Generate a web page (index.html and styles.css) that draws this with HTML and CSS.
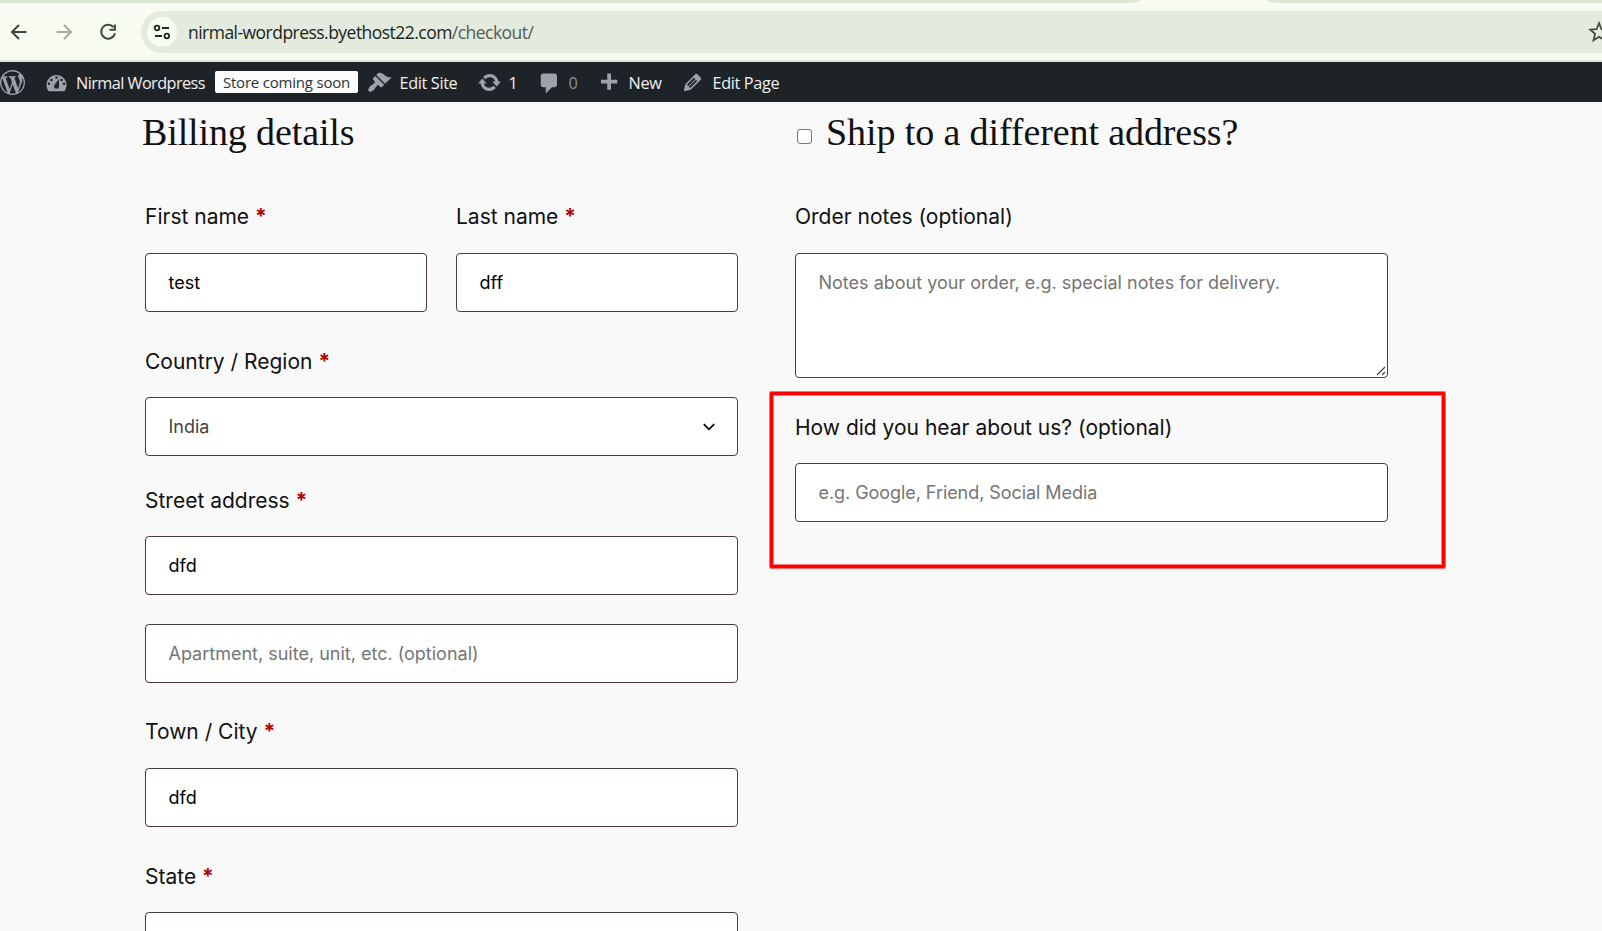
FILE: index.html
```html
<!DOCTYPE html>
<html lang="en">
<head>
<meta charset="utf-8">
<title>Checkout</title>
<link rel="stylesheet" href="styles.css">
</head>
<body>
<header class="browser">
  <div class="tabstrip"><span class="tabs-left"></span><span class="tabs-right"></span></div>
  <div class="toolbar">
    <svg class="nav-icon" viewBox="0 0 20 20"><path d="M17.5 10H3.8M10 3L3 10l7 7"/></svg>
    <svg class="nav-icon disabled" viewBox="0 0 20 20"><path d="M2.5 10h13.7M10 3l7 7-7 7"/></svg>
    <svg class="nav-icon" viewBox="0 0 20 20"><path d="M15.6 5.2A7 7 0 1 0 17 11.3M16.9 2.6v5.2h-5.4"/></svg>
    <div class="omnibox">
      <span class="site-chip"><svg viewBox="0 0 18 18"><circle cx="4" cy="5" r="2.3"/><path d="M9 5h7M2 13h7"/><circle cx="13.8" cy="13" r="2.3"/></svg></span>
      <span class="url">nirmal-wordpress.byethost22.com<span class="path">/checkout/</span></span>
      <svg class="star" viewBox="0 0 20 20"><path d="M10 2l2.2 5.5 5.8.4-4.4 3.8 1.4 5.8-5-3.2-5 3.2 1.4-5.8L2 7.900l5.800-.4z"/></svg>
    </div>
  </div>
</header>
<nav class="adminbar">
  <svg class="dash wp" viewBox="0 0 20 20"><path d="M20 10c0-5.510-4.490-10-10-10C4.480 0 0 4.490 0 10c0 5.520 4.480 10 10 10 5.510 0 10-4.480 10-10zM7.780 15.370L4.370 6.220c.55-.02 1.170-.08 1.170-.08.5-.06.44-1.130-.06-1.110 0 0-1.450.11-2.370.11-.18 0-.37 0-.58-.01C4.120 2.690 6.870 1.110 10 1.110c2.330 0 4.450.87 6.050 2.340-.68-.11-1.650.39-1.650 1.580 0 .74.45 1.360.9 2.100.35.61.55 1.360.55 2.460 0 1.490-1.400 5-1.400 5l-3.030-8.370c.54-.02.82-.17.82-.17.5-.05.44-1.250-.06-1.220 0 0-1.440.12-2.380.12-.87 0-2.330-.12-2.330-.12-.5-.03-.56 1.200-.06 1.220l.92.08 1.260 3.410zM17.410 10c.24-.64.74-1.870.43-4.250.7 1.290 1.050 2.710 1.050 4.250 0 3.290-1.730 6.240-4.400 7.780.97-2.590 1.940-5.200 2.920-7.780zM6.100 18.090C3.120 16.650 1.110 13.530 1.110 10c0-1.300.23-2.480.72-3.590C3.250 10.300 4.670 14.200 6.100 18.090zm4.030-6.630l2.580 6.980c-.86.29-1.760.45-2.710.45-.79 0-1.570-.11-2.290-.33.81-2.380 1.620-4.740 2.420-7.100z"/></svg>
  <svg class="dash gauge" viewBox="0 0 20 20"><path fill-rule="evenodd" d="M3.760 17h12.480c1.100-1.370 1.760-3.110 1.760-5 0-4.420-3.580-8-8-8s-8 3.580-8 8c0 1.890.66 3.630 1.760 5zM10 5a1 1 0 1 1 0 2 1 1 0 0 1 0-2zM6 7a1 1 0 1 1 0 2 1 1 0 0 1 0-2zm8 0a1 1 0 1 1 0 2 1 1 0 0 1 0-2zm-5.370 4.550L12 7v6a2 2 0 0 1-4 0c0-.57.24-1.080.63-1.450zM4 10a1 1 0 1 1 0 2 1 1 0 0 1 0-2zm12 0a1 1 0 1 1 0 2 1 1 0 0 1 0-2z"/></svg>
  <span class="item site">Nirmal Wordpress</span>
  <span class="badge">Store coming soon</span>
  <svg class="dash brush" viewBox="0 0 20 20"><path d="M14.480 11.060L7.410 3.990l1.500-1.500c.5-.56 2.300-.47 3.510.32 1.210.8 1.430 1.280 2.910 2.100 1.180.64 2.450 1.260 4.450.85zm-.71.71L6.700 4.700 4.930 6.470c-.39.39-.39 1.020 0 1.410l1.060 1.060c.39.39.39 1.030 0 1.420-.6.6-1.430 1.110-2.210 1.690-.35.26-.7.53-1.010.84C1.430 14.230.4 16.080 1.400 17.070c.99 1 2.840-.03 4.180-1.360.31-.31.58-.66.85-1.020.57-.78 1.080-1.610 1.690-2.210.39-.39 1.020-.39 1.410 0l1.060 1.060c.39.39 1.020.39 1.410 0z"/></svg>
  <span class="item edit-site">Edit Site</span>
  <svg class="dash update" viewBox="0 0 20 20"><path d="M10.200 3.280c3.530 0 6.430 2.610 6.920 6h2.080l-3.500 4-3.500-4h2.320c-.45-1.970-2.210-3.450-4.320-3.450-1.450 0-2.730.71-3.540 1.780L4.950 5.660C6.230 4.200 8.110 3.280 10.200 3.280zm-.4 13.440c-3.520 0-6.430-2.610-6.920-6H.8l3.500-4c1.170 1.330 2.330 2.670 3.500 4H5.480c.45 1.970 2.210 3.450 4.320 3.450 1.450 0 2.730-.71 3.540-1.780l1.710 1.950c-1.280 1.460-3.150 2.380-5.250 2.380z"/></svg>
  <span class="item count">1</span>
  <svg class="dash comment" viewBox="0 0 20 20"><path d="M5 2h9c1.100 0 2 .9 2 2v7c0 1.100-.9 2-2 2h-2l-5 5v-5H5c-1.100 0-2-.9-2-2V4c0-1.100.9-2 2-2z"/></svg>
  <span class="item zero">0</span>
  <svg class="dash plus" viewBox="0 0 20 20"><path d="M17 7v3h-5v5H9v-5H4V7h5V2h3v5h5z"/></svg>
  <span class="item new">New</span>
  <svg class="dash pencil" viewBox="0 0 20 20"><path fill-rule="evenodd" d="M13.890 3.390l2.710 2.720c.46.46.42 1.240.03 1.640l-8.010 8.020-5.560 1.160 1.160-5.580s7.600-7.630 7.990-8.030c.39-.39 1.220-.39 1.680.07zm-2.730 2.790l-5.590 5.610 1.110 1.110 5.540-5.650zm-2.970 8.230l5.580-5.600-1.070-1.080-5.590 5.600z"/></svg>
  <span class="item edit-page">Edit Page</span>
</nav>
<main class="checkout">
  <section class="column">
    <h3 class="heading">Billing details</h3>
    <div class="name-row">
      <div class="field"><label>First name <b>*</b></label><div class="input">test</div></div>
      <div class="field"><label>Last name <b>*</b></label><div class="input">dff</div></div>
    </div>
    <div class="field tight"><label>Country / Region <b>*</b></label>
      <div class="input select">India<svg viewBox="0 0 12 8"><path d="M.8 1.200L6 6.400l5.200-5.200"/></svg></div></div>
    <div class="field tight street"><label>Street address <b>*</b></label><div class="input">dfd</div>
      <div class="input hint apartment">Apartment, suite, unit, etc. (optional)</div></div>
    <div class="field town"><label>Town / City <b>*</b></label><div class="input">dfd</div></div>
    <div class="field tight"><label>State <b>*</b></label><div class="input"></div></div>
  </section>
  <section class="column right">
    <h3 class="heading ship"><span class="checkbox"></span><span class="ship-text">Ship to a different address?</span></h3>
    <div class="field"><label class="notes-label">Order notes (optional)</label>
      <div class="input textarea hint">Notes about your order, e.g. special notes for delivery.<svg viewBox="0 0 10 10"><path d="M1 9l8-8M6 9l3-3"/></svg></div></div>
    <div class="field tight"><span class="highlight"></span><label class="hear-label">How did you hear about us? (optional)</label>
      <div class="input hint google">e.g. Google, Friend, Social Media</div></div>
  </section>
</main>
</body>
</html>
```
FILE: styles.css
```css
* { box-sizing: border-box; }
body { margin: 0; height: 931px; overflow: hidden; background: #f9f9f9; font-family: Inter, sans-serif; color: #111; }

.browser { height: 62px; background: #f8fbf1; border-bottom: 2px solid #dce7d6; font-family: "Open Sans", "Noto Sans", sans-serif; }
.tabstrip { display: flex; justify-content: space-between; height: 3px; }
.tabs-left { width: 1140px; background: #dce7d6; border-bottom-right-radius: 12px 3px; }
.tabs-right { width: 335px; background: #dce7d6; border-bottom-left-radius: 12px 3px; }
.toolbar { display: flex; align-items: center; padding-left: 8.5px; height: 57px; }
.nav-icon { width: 20px; height: 20px; margin-right: 25px; flex: none; fill: none; stroke: #3c4b38; stroke-width: 2; }
.nav-icon.disabled { stroke: #a5aca0; }
.toolbar .nav-icon:nth-of-type(3) { margin: 0 23px 0 -.5px; }
.omnibox { flex: 1; height: 42px; display: flex; align-items: center; background: #e3ebdf; border-radius: 21px 0 0 21px; padding-left: 6px; overflow: hidden; }
.site-chip { width: 30px; height: 30px; border-radius: 50%; background: #f8fbf2; display: flex; align-items: center; justify-content: center; flex: none; }
.site-chip svg { width: 18px; height: 18px; fill: none; stroke: #202820; stroke-width: 1.8; }
.url { margin-left: 11px; padding-top: 1px; font-size: 17.5px; letter-spacing: -.53px; color: #1d231b; white-space: nowrap; }
.path { color: #555d52; }
.star { width: 22px; height: 22px; flex: none; margin-left: auto; margin-right: -8px; fill: none; stroke: #454d43; stroke-width: 1.6; }

.adminbar { height: 40px; background: #1d2327; display: flex; align-items: center; font: 16.25px "Open Sans", "Noto Sans", sans-serif; color: #f0f0f1; white-space: nowrap; }
.dash { width: 25px; height: 25px; fill: #9ca2a7; flex: none; }
.gauge { margin-left: 18.5px; }
.item, .badge { flex: none; }
.item { padding-top: 2px; }
.site { width: 146.5px; padding-left: 7.5px; letter-spacing: -.56px; }
.badge { width: 143px; height: 22px; line-height: 22px; border-radius: 2px; background: #fcfcfc; color: #2c3338; text-align: center; font-size: 15px; font-weight: 500; letter-spacing: -.2px; }
.brush { margin-left: 8.5px; }
.edit-site { width: 85px; padding-left: 8px; letter-spacing: -.35px; }
.count { width: 35px; padding-left: 7px; }
.zero { width: 34px; padding-left: 7px; color: #8a8f94; }
.update, .brush, .pencil { margin-top: 1px; }
.comment, .plus { margin-top: 3px; }
.new { width: 59px; padding-left: 8px; letter-spacing: -.3px; }
.edit-page { padding-left: 8px; letter-spacing: -.35px; }

.checkout { display: grid; grid-template-columns: 593px 593px; column-gap: 57px; padding-left: 145px; height: 829px; overflow: hidden; }
.heading { margin: 0 0 0 -3px; height: 98px; padding-top: 5px; font: 400 38px/50px "Liberation Serif", serif; color: #111; white-space: nowrap; letter-spacing: -.12px; }
.ship { display: flex; margin-left: 0; letter-spacing: -.1px; }
.checkbox { width: 15px; height: 15px; margin: 22px 14px 0 2px; border: 1px solid #767676; border-radius: 3px; background: #fff; }
.name-row { display: grid; grid-template-columns: 282px 282px; column-gap: 29px; }
.field { position: relative; margin-bottom: 33px; }
.field label { display: block; height: 33px; margin-bottom: 20px; font-size: 21px; line-height: 33px; font-weight: 400; white-space: nowrap; }
.tight label { margin-bottom: 19px; }
.field b { color: #b30000; font-weight: 700; }
.input { height: 59px; padding: 0 22.5px; border: 1px solid #4b3b40; border-radius: 4px; background: #fff; font-size: 18px; line-height: 57px; color: #000; white-space: nowrap; }
.select { display: flex; justify-content: space-between; align-items: center; color: #444; }
.select svg { width: 12px; height: 8px; fill: none; stroke: #000; stroke-width: 1.7; }
.street { margin-top: -5px; }
.column .street { margin-bottom: 32px; }
.hint { color: #757575; }
.google { letter-spacing: -.06px; }
.apartment { margin-top: 29px; }
.textarea { height: 125px; position: relative; }
.textarea svg { position: absolute; right: 1px; bottom: 1px; width: 10px; height: 10px; fill: none; stroke: #444; stroke-width: 1.2; }
.highlight { position: absolute; left: -25px; top: -19px; width: 675px; height: 176px; border: 3px solid #f00; border-radius: 1px; box-shadow: 0 0 0 1px rgba(255, 0, 0, .55), inset 0 0 0 1px rgba(255, 0, 0, .5); }
```
